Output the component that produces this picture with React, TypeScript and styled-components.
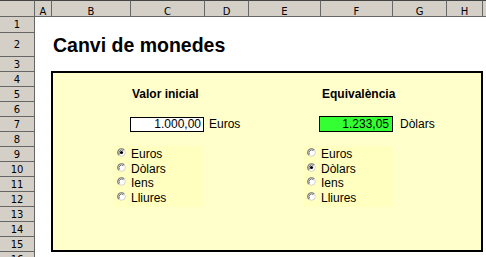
import React from "react";
import styled, { createGlobalStyle, css } from "styled-components";

const Global = createGlobalStyle`
  html, body { margin: 0; padding: 0; background: #ffffff; }
  body { width: 486px; height: 257px; overflow: hidden; font-family: "Liberation Sans", Arial, sans-serif; }
`;

const Viewport = styled.div`
  width: 486px;
  height: 257px;
  overflow: hidden;
  background: #ffffff;
`;

const Sheet = styled.div`
  display: grid;
  grid-template-columns: 35px 17px 79px 74px 44px 72px 72px 54px 36px 72px;
  grid-template-rows: 17px 16px 24px 15px repeat(13, 15px);
  width: max-content;
`;

const headBase = css`
  box-sizing: border-box;
  background: #d4d0c8;
  border-right: 1px solid #666666;
  border-bottom: 1px solid #666666;
  font-family: "DejaVu Sans", Tahoma, sans-serif;
  font-size: 10px;
  color: #000000;
  display: flex;
  justify-content: center;
  overflow: hidden;
  white-space: nowrap;
`;

const Corner = styled.div`
  ${headBase};
  border-top: 1px solid #444444;
  grid-row: 1;
  grid-column: 1;
`;

const ColHead = styled.div`
  ${headBase};
  border-top: 1px solid #444444;
  grid-row: 1;
  align-items: center;
  padding-top: 5px;
`;

const RowHead = styled.div`
  ${headBase};
  grid-column: 1;
  align-items: center;
`;

const Title = styled.h1`
  grid-column: 3 / 9;
  grid-row: 3;
  margin: 0;
  padding-left: 1px;
  font-family: "Liberation Sans", Arial, sans-serif;
  font-weight: bold;
  font-size: 19.5px;
  line-height: 24px;
  color: #000000;
  white-space: nowrap;
`;

const Panel = styled.section`
  grid-column: 3 / 10;
  grid-row: 5 / 17;
  margin: -1px 0 0 -1px;
  border: 2px solid #000000;
  background: #ffffcc;
  display: grid;
  grid-template-columns: 78px 74px 44px 72px 72px 54px 1fr;
  grid-template-rows: 14px 15px 15px 15px 15px 1fr;
  font-family: "Liberation Sans", Arial, sans-serif;
  font-size: 12px;
  color: #000000;
`;

const Heading = styled.div<{ $col: number }>`
  grid-column: ${(p) => p.$col};
  grid-row: 2;
  padding-left: 1px;
  font-weight: bold;
  font-size: 12px;
  line-height: 15px;
  white-space: nowrap;
`;

const ValueBox = styled.div<{ $col: number; $green?: boolean }>`
  grid-column: ${(p) => p.$col};
  grid-row: 4;
  box-sizing: border-box;
  width: 74px;
  border: 1px solid #000000;
  text-align: right;
  white-space: nowrap;
  ${(p) =>
    p.$green
      ? css`
          background: #33ff33;
          height: 16px;
          margin: -1px 0 0 -2px;
          padding-right: 3px;
          line-height: 14px;
        `
      : css`
          background: #ffffff;
          height: 15px;
          margin-left: -1px;
          padding-right: 2px;
          line-height: 13px;
        `}
`;

const Unit = styled.div<{ $col: number; $indent: number }>`
  grid-column: ${(p) => p.$col};
  grid-row: 4;
  padding-left: ${(p) => p.$indent}px;
  line-height: 15px;
  white-space: nowrap;
`;

const RadioGroup = styled.div<{ $cols: string; $endGap: number }>`
  grid-column: ${(p) => p.$cols};
  grid-row: 6;
  justify-self: end;
  align-self: start;
  width: 90px;
  height: 61px;
  margin: -1px ${(p) => p.$endGap}px 0 0;
  padding: 1px 0 0 4px;
  box-sizing: border-box;
  background: #ffffbf;
  display: flex;
  flex-direction: column;
`;

const RadioRow = styled.label`
  display: flex;
  align-items: center;
  gap: 5px;
  height: 14.5px;
  line-height: 14px;
  white-space: nowrap;
`;

const RadioSvg = styled.svg`
  flex: none;
  width: 9px;
  height: 9px;
  margin-bottom: 3px;
`;

function RadioMark({ checked }: { checked: boolean }) {
  return (
    <RadioSvg viewBox="0 0 9 9">
      <circle cx="4.5" cy="4.5" r="3.8" fill="#ffffff" stroke="#d4d0c8" strokeWidth="1" />
      <path d="M1.8 7.2 A3.8 3.8 0 0 1 7.2 1.8" fill="none" stroke="#7a7a7a" strokeWidth="1.1" />
      <path d="M2.6 6.4 A2.7 2.7 0 0 1 6.4 2.6" fill="none" stroke="#303030" strokeWidth="0.7" />
      {checked && <circle cx="4.5" cy="4.5" r="1.6" fill="#000000" />}
    </RadioSvg>
  );
}

const OPTIONS = ["Euros", "Dòlars", "Iens", "Lliures"];
const COLS = ["A", "B", "C", "D", "E", "F", "G", "H", ""];

function Options({ selected, cols, endGap }: { selected: string; cols: string; endGap: number }) {
  return (
    <RadioGroup $cols={cols} $endGap={endGap}>
      {OPTIONS.map((o) => (
        <RadioRow key={o}>
          <RadioMark checked={o === selected} />
          {o}
        </RadioRow>
      ))}
    </RadioGroup>
  );
}

export default function App() {
  return (
    <Viewport>
      <Global />
      <Sheet>
        <Corner />
        {COLS.map((c, i) => (
          <ColHead key={i} style={{ gridColumn: i + 2 }}>
            {c}
          </ColHead>
        ))}
        {Array.from({ length: 16 }, (_, i) => (
          <RowHead key={i} style={{ gridRow: i + 2 }}>
            {i + 1}
          </RowHead>
        ))}
        <Title>Canvi de monedes</Title>
        <Panel>
          <Heading $col={2}>Valor inicial</Heading>
          <Heading $col={5}>Equivalència</Heading>
          <ValueBox $col={2}>1.000,00</ValueBox>
          <Unit $col={3} $indent={4}>
            Euros
          </Unit>
          <ValueBox $col={5} $green>
            1.233,05
          </ValueBox>
          <Unit $col={6} $indent={7}>
            Dòlars
          </Unit>
          <Options selected="Euros" cols="1 / 3" endGap={2} />
          <Options selected="Dòlars" cols="4 / 6" endGap={0} />
        </Panel>
      </Sheet>
    </Viewport>
  );
}
